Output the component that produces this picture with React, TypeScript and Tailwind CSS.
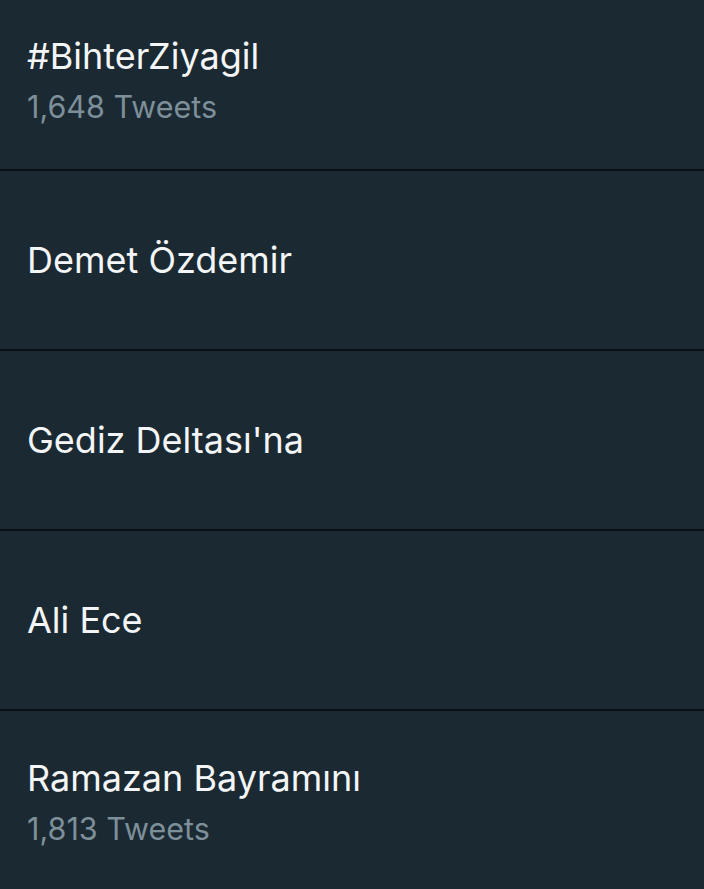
import React from "react";

const rows = [
  { title: "#BihterZiyagil", sub: "1,648 Tweets" },
  { title: "Demet Özdemir" },
  { title: "Gediz Deltası'na" },
  { title: "Ali Ece" },
  { title: "Ramazan Bayramını", sub: "1,813 Tweets" },
];

export default function App() {
  return (
    <div
      className="w-[704px] h-[889px] overflow-hidden bg-[#1b2932] flex flex-col"
      style={{ fontFamily: "Inter, 'Liberation Sans', sans-serif" }}
    >
      {rows.map((r, i) => (
        <div
          key={i}
          className={`shrink-0 flex flex-col justify-center px-[27px] ${
            i === 0 ? "h-[171px] pb-[11px]" : "h-[180px]"
          } ${i < rows.length - 1 ? "border-b-2 border-[#091016]" : ""}`}
        >
          <div className="text-[36px] leading-[44px] text-[#f3f5f6]">{r.title}</div>
          {r.sub && (
            <div className="text-[30.5px] leading-[36px] text-[#7d8f99] mt-[11px]">{r.sub}</div>
          )}
        </div>
      ))}
    </div>
  );
}
